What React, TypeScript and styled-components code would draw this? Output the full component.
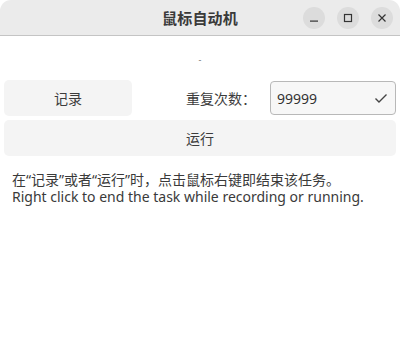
import React from "react";
import styled, { createGlobalStyle } from "styled-components";

const Global = createGlobalStyle`
  html, body { margin: 0; padding: 0; background: #ffffff; }
  body { font-family: "Noto Sans", "Noto Sans CJK SC", sans-serif; color: #333; }
`;

const Window = styled.div`
  width: 400px;
  height: 337px;
  display: flex;
  flex-direction: column;
  background: #ffffff;
`;

const TitleBar = styled.div`
  height: 36px;
  background: #ebebeb;
  border-bottom: 1px solid #c4c4c4;
  border-radius: 11px 11px 0 0;
  display: grid;
  grid-template-columns: 1fr auto 1fr;
  align-items: center;
  padding: 0 7px 0 7px;
  box-sizing: border-box;
`;

const Title = styled.div`
  grid-column: 2;
  font-family: "Noto Sans CJK SC", sans-serif;
  font-weight: 700;
  font-size: 15px;
  color: #3a3a3a;
  letter-spacing: 0.2px;
`;

const Controls = styled.div`
  grid-column: 3;
  justify-self: end;
  display: flex;
  gap: 12px;
`;

const CtlButton = styled.div`
  width: 22px;
  height: 22px;
  border-radius: 50%;
  background: #dcdcdc;
  display: flex;
  align-items: center;
  justify-content: center;
`;

const Body = styled.div`
  display: flex;
  flex-direction: column;
  padding: 0 4px;
`;

const Status = styled.div`
  height: 44px;
  display: flex;
  align-items: center;
  justify-content: center;
  font-size: 9px;
  color: #777;
  padding-top: 2px;
  box-sizing: border-box;
`;

const Row = styled.div`
  display: flex;
  align-items: center;
  height: 36px;
`;

const Button = styled.div<{ $wide?: boolean }>`
  height: 36px;
  width: ${(p) => (p.$wide ? "392px" : "128px")};
  background: #f4f4f4;
  border-radius: 5px;
  display: flex;
  align-items: center;
  justify-content: center;
  font-family: "Noto Sans CJK SC", sans-serif;
  font-size: 14px;
  color: #3c3c3c;
  box-sizing: border-box;
`;

const Label = styled.div`
  margin-left: 54px;
  font-family: "Noto Sans CJK SC", sans-serif;
  font-size: 14px;
  color: #3c3c3c;
  width: 84px;
`;

const Input = styled.div`
  width: 126px;
  height: 34px;
  box-sizing: border-box;
  border: 1px solid #b8b8b8;
  border-radius: 4px;
  background: #f7f7f7;
  display: flex;
  align-items: center;
  justify-content: space-between;
  padding: 0 6px 0 6px;
  font-size: 14px;
  color: #333;
`;

const Gap = styled.div`
  height: 4px;
`;

const Info = styled.div`
  margin-top: 15px;
  padding-left: 8px;
  font-size: 14px;
  line-height: 17px;
  color: #3a3a3a;
`;

export default function App() {
  return (
    <Window>
      <Global />
      <TitleBar>
        <Title>鼠标自动机</Title>
        <Controls>
          <CtlButton>
            <svg width="10" height="10" viewBox="0 0 10 10">
              <rect x="1" y="7.5" width="8" height="1.2" fill="#333" />
            </svg>
          </CtlButton>
          <CtlButton>
            <svg width="10" height="10" viewBox="0 0 10 10">
              <rect x="1.5" y="1.5" width="7" height="7" fill="none" stroke="#333" strokeWidth="1.2" />
            </svg>
          </CtlButton>
          <CtlButton>
            <svg width="10" height="10" viewBox="0 0 10 10">
              <path d="M1.5 1.5 L8.5 8.5 M8.5 1.5 L1.5 8.5" stroke="#333" strokeWidth="1.2" />
            </svg>
          </CtlButton>
        </Controls>
      </TitleBar>
      <Body>
        <Status>-</Status>
        <Row>
          <Button>记录</Button>
          <Label>重复次数：</Label>
          <Input>
            <span>99999</span>
            <svg width="16" height="16" viewBox="0 0 16 16">
              <path d="M2.5 8.5 L6 12 L13.5 4.5" fill="none" stroke="#444" strokeWidth="1.4" />
            </svg>
          </Input>
        </Row>
        <Gap />
        <Button $wide>运行</Button>
        <Info>
          在“记录”或者“运行”时，点击鼠标右键即结束该任务。
          <br />
          Right click to end the task while recording or running.
        </Info>
      </Body>
    </Window>
  );
}
